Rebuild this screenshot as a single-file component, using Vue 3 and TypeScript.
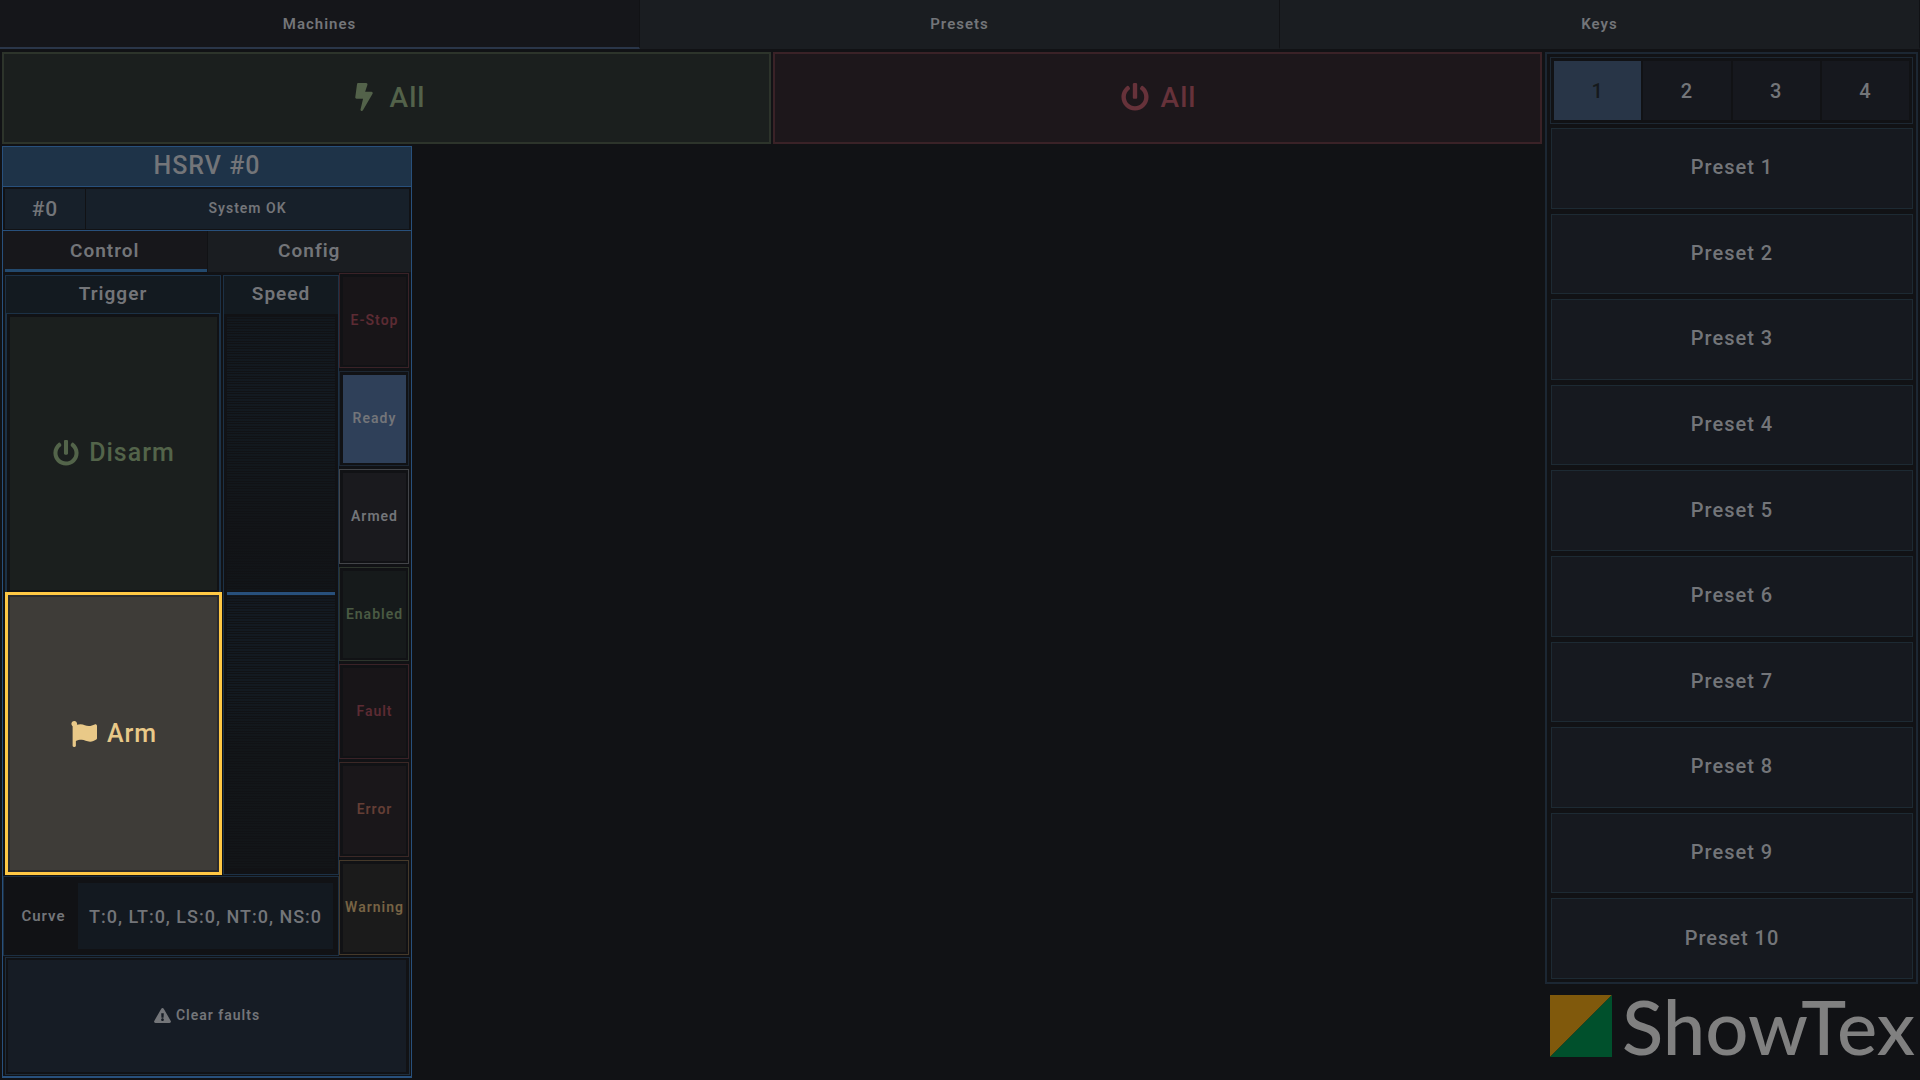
<script setup lang="ts">
import { ref } from 'vue'

interface Status {
  label: string
  tone: string
  on?: boolean
}

const pages = ['Machines', 'Presets', 'Keys']
const activePage = ref('Machines')

const cardTabs = ['Control', 'Config']
const activeCardTab = ref('Control')

const statuses: Status[] = [
  { label: 'E-Stop', tone: 'red' },
  { label: 'Ready', tone: 'blue', on: true },
  { label: 'Armed', tone: 'grey' },
  { label: 'Enabled', tone: 'green' },
  { label: 'Fault', tone: 'red' },
  { label: 'Error', tone: 'orange' },
  { label: 'Warning', tone: 'yellow' },
]

const banks = [1, 2, 3, 4]
const activeBank = ref(1)
const presets = Array.from({ length: 10 }, (_, i) => `Preset ${i + 1}`)
const speed = ref(50)

const powerPath =
  'M400 54.1c63 45 104 118.6 104 201.9 0 136.8-110.8 247.7-247.5 248C120 504.3 8.2 393 8 256.4 7.9 173.1 48.9 99.3 111.8 54.2c11.7-8.3 28-4.8 35 7.7L162.6 90c5.9 10.5 3.1 23.8-6.6 31-41.5 30.8-68 79.6-68 134.9-.1 92.3 74.5 168.1 168 168.1 91.6 0 168.6-74.2 168-169.1-.3-51.8-24.7-101.8-68.1-134-9.7-7.2-12.4-20.5-6.5-30.9l15.8-28.1c7-12.4 23.2-16.1 34.8-7.8zM296 264V24c0-13.3-10.7-24-24-24h-32c-13.3 0-24 10.7-24 24v240c0 13.3 10.7 24 24 24h32c13.3 0 24-10.7 24-24z'
</script>

<template>
  <div class="app">
    <nav class="pages">
      <button
        v-for="page in pages"
        :key="page"
        type="button"
        class="page-tab"
        :class="{ active: page === activePage }"
        @click="activePage = page"
      >
        {{ page }}
      </button>
    </nav>

    <div class="content">
      <main class="machines">
        <div class="all-row">
          <button type="button" class="all green">
            <svg class="icon large" viewBox="-96 0 512 512" aria-hidden="true">
              <path d="M296 160H180.6l42.6-129.8C227.2 15 215.7 0 200 0H56C44 0 33.8 8.9 32.2 20.8l-32 240C-1.7 275.2 9.5 288 24 288h118.7L96.6 482.5c-3.6 15.2 8 29.5 23.3 29.5 8.4 0 16.4-4.4 20.8-12l176-304c9.3-15.9-2.2-36-20.7-36z" />
            </svg>
            <span>All</span>
          </button>
          <button type="button" class="all red">
            <svg class="icon large" viewBox="0 0 512 512" aria-hidden="true"><path :d="powerPath" /></svg>
            <span>All</span>
          </button>
        </div>

        <section class="card">
          <h2 class="card-title">HSRV #0</h2>
          <div class="card-status">
            <div class="card-id">#0</div>
            <div class="card-message">System OK</div>
          </div>
          <div class="card-tabs">
            <button
              v-for="tab in cardTabs"
              :key="tab"
              type="button"
              class="card-tab"
              :class="{ active: tab === activeCardTab }"
              @click="activeCardTab = tab"
            >
              {{ tab }}
            </button>
          </div>

          <div class="card-body">
            <div class="controls">
              <div class="control-row">
                <div class="trigger">
                  <h3 class="control-title">Trigger</h3>
                  <div class="disarm-frame">
                    <button type="button" class="trigger-button disarm">
                      <svg class="icon" viewBox="0 0 512 512" aria-hidden="true"><path :d="powerPath" /></svg>
                      <span>Disarm</span>
                    </button>
                  </div>
                  <div class="arm-frame">
                    <button type="button" class="trigger-button arm">
                      <svg class="icon" viewBox="0 0 512 512" aria-hidden="true">
                        <path d="M349.565 98.783C295.978 98.783 251.721 64 184.348 64c-24.955 0-47.309 4.384-68.045 12.013a55.947 55.947 0 0 0 3.586-23.562C118.117 24.015 94.806 1.206 66.338.048 34.345-1.254 8 24.296 8 56c0 19.026 9.497 35.825 24 45.945V488c0 13.255 10.745 24 24 24h16c13.255 0 24-10.745 24-24v-94.4c28.311-12.064 63.582-22.122 114.435-22.122 53.588 0 97.844 34.783 165.217 34.783 48.169 0 86.667-16.294 122.505-40.858C506.84 359.452 512 349.571 512 339.045v-243.1c0-23.393-24.269-38.87-45.485-29.016-34.338 15.948-76.454 31.854-116.95 31.854z" />
                      </svg>
                      <span>Arm</span>
                    </button>
                  </div>
                </div>

                <div class="speed">
                  <label class="control-title speed-title" for="speed">Speed</label>
                  <input id="speed" v-model="speed" class="slider" type="range" min="0" max="100" />
                </div>
              </div>

              <div class="curve">
                <span class="curve-label">Curve</span>
                <button type="button" class="curve-value">T:0, LT:0, LS:0, NT:0, NS:0</button>
              </div>
            </div>

            <ul class="statuses">
              <li
                v-for="status in statuses"
                :key="status.label"
                class="status"
                :class="[status.tone, { on: status.on }]"
              >
                <span class="status-fill">{{ status.label }}</span>
              </li>
            </ul>
          </div>

          <div class="clear-frame">
            <button type="button" class="clear">
              <svg class="icon warn" viewBox="0 0 576 512" aria-hidden="true">
                <path d="M569.517 440.013C587.975 472.007 564.806 512 527.94 512H48.054c-36.937 0-59.999-40.055-41.577-71.987L246.423 23.985c18.467-32.009 64.72-31.951 83.154 0l239.94 416.028zM288 354c-25.405 0-46 20.595-46 46s20.595 46 46 46 46-20.595 46-46-20.595-46-46-46zm-43.673-165.346l7.418 136c.347 6.364 5.609 11.346 11.982 11.346h48.546c6.373 0 11.635-4.982 11.982-11.346l7.418-136c.375-6.874-5.098-12.654-11.982-12.654h-63.383c-6.884 0-12.356 5.78-11.981 12.654z" />
              </svg>
              <span>Clear faults</span>
            </button>
          </div>
        </section>
      </main>

      <aside class="side">
        <section class="presets">
          <div class="banks">
            <button
              v-for="bank in banks"
              :key="bank"
              type="button"
              class="bank"
              :class="{ active: bank === activeBank }"
              @click="activeBank = bank"
            >
              {{ bank }}
            </button>
          </div>
          <button v-for="preset in presets" :key="preset" type="button" class="preset">{{ preset }}</button>
        </section>
        <div class="logo">
          <svg class="logo-mark" viewBox="0 0 62 62" aria-hidden="true">
            <path d="M0 0H62L0 62Z" fill="#80590c" />
            <path d="M62 0V62H0Z" fill="#00502c" />
          </svg>
          <span class="logo-name">ShowTex</span>
        </div>
      </aside>
    </div>
  </div>
</template>

<style>
body {
  margin: 0;
  background: #111215;
}
</style>

<style scoped>
.app {
  display: flex;
  flex-direction: column;
  min-height: 100vh;
  box-sizing: border-box;
  background: #111215;
  color: #737579;
  font-family: Roboto, "Liberation Sans", sans-serif;
  font-size: 14px;
  font-weight: 600;
  letter-spacing: 1px;
}

.app *,
.app *::before {
  box-sizing: border-box;
}

button {
  margin: 0;
  padding: 0;
  border: 0;
  border-radius: 0;
  background: none;
  color: inherit;
  font: inherit;
  letter-spacing: inherit;
  cursor: pointer;
}

.icon {
  display: block;
  width: 26px;
  height: 26px;
  fill: currentColor;
}

.icon.large {
  width: 28px;
  height: 28px;
}

.pages {
  display: flex;
  height: 49px;
}

.page-tab {
  flex: 1;
  border-right: 1px solid #111215;
  border-bottom: 2px solid #1a1d21;
  background: #1a1d21;
  font-size: 15px;
}

.page-tab.active {
  border-bottom-color: #2a3649;
  background: #15161a;
}

.content {
  display: flex;
  flex: 1;
  gap: 3px;
  padding: 3px 2px 2px;
}

.machines {
  display: flex;
  flex: 1;
  flex-direction: column;
  gap: 2px;
}

.all-row {
  display: flex;
  gap: 2px;
  height: 92px;
}

.all {
  display: flex;
  flex: 1;
  align-items: center;
  justify-content: center;
  gap: 12px;
  padding: 0 0 2px 2px;
  border: 2px solid;
  font-size: 28px;
  font-weight: 500;
}

.all.green {
  border-color: #2d342b;
  background: #1b1f1e;
  color: #53624a;
}

.all.red {
  border-color: #3a2227;
  background: #1d171b;
  color: #66323a;
}

.card {
  display: flex;
  flex: 1;
  flex-direction: column;
  width: 410px;
  border: 1px solid #28507c;
  border-bottom-width: 2px;
}

.card-title {
  height: 40px;
  margin: 0;
  border-bottom: 1px solid #28507c;
  background: #1e3348;
  font-size: 25px;
  font-weight: 500;
  line-height: 37px;
  text-align: center;
}

.card-status {
  display: flex;
  gap: 1px;
  height: 44px;
  padding: 2px 2px 1px;
  border-bottom: 1px solid #28507c;
}

.card-id,
.card-message {
  display: flex;
  align-items: center;
  justify-content: center;
  background: #17202a;
}

.card-id {
  width: 80px;
  font-size: 21px;
  font-weight: 500;
}

.card-message {
  flex: 1;
  padding-bottom: 2px;
}

.card-tabs {
  display: flex;
  gap: 1px;
  height: 41px;
}

.card-tab {
  position: relative;
  flex: 1;
  padding-bottom: 3px;
  background: #1a1d21;
  font-size: 19px;
}

.card-tab.active {
  background: #17171b;
}

.card-tab.active::before {
  position: absolute;
  right: 0;
  bottom: 0;
  left: 2px;
  height: 3px;
  background: #23496d;
  content: "";
}

.card-body {
  display: flex;
  flex: 1;
  padding-right: 2px;
}

.controls {
  display: flex;
  flex: 1;
  flex-direction: column;
  gap: 1px;
  padding-top: 3px;
}

.control-row {
  display: flex;
  flex: 1;
  gap: 1px;
  padding-left: 2px;
}

.trigger {
  display: flex;
  flex-direction: column;
  width: 217px;
}

.control-title {
  height: 39px;
  margin: 0 1px 0 0;
  border: 1px solid #1c3146;
  background: #131a20;
  font-size: 19px;
  font-weight: 600;
  line-height: 35px;
  text-align: center;
}

.disarm-frame {
  display: flex;
  flex: 1;
  margin-right: 1px;
  padding: 3px 2px 2px 3px;
  border: solid #1c3146;
  border-width: 0 2px;
}

.arm-frame {
  display: flex;
  height: 283px;
  padding: 2px;
  border: 3px solid #ffc844;
  background: #2b2b2d;
}

.trigger-button {
  display: flex;
  flex: 1;
  align-items: center;
  justify-content: center;
  gap: 10px;
  padding-left: 1px;
  font-size: 25px;
  font-weight: 500;
}

.disarm {
  padding-bottom: 2px;
  background: #1b1f1e;
  color: #53644a;
}

.arm {
  background: #3e3c38;
  color: #e9c988;
}

.speed {
  display: flex;
  flex: 1;
  flex-direction: column;
  border: 1px solid #1c3146;
}

.speed-title {
  height: 38px;
  margin: 0;
  border: 0;
}

.slider {
  flex: 1;
  width: auto;
  min-height: 0;
  margin: 3px 3px 5px;
  appearance: none;
  background:
    repeating-linear-gradient(transparent 0 1px, #111215 1px 2px, transparent 2px 4px, #111215 4px 5px),
    linear-gradient(#12181e, #131a21 14%, #12181d 26%, #121417 40%, #111519 49%, #131a22 52%, #131a21 68%, #121619 78%, #121518);
  cursor: pointer;
  writing-mode: vertical-lr;
}

.slider::-webkit-slider-runnable-track {
  width: 100%;
}

.slider::-webkit-slider-thumb {
  width: 108px;
  height: 3px;
  appearance: none;
  background: #28507c;
}

.curve {
  display: flex;
  align-items: stretch;
  height: 80px;
  padding: 6px 5px;
  border: 1px solid #1c2f42;
}

.curve-label {
  display: flex;
  flex: 1;
  align-items: center;
  justify-content: center;
  font-size: 15px;
}

.curve-value {
  width: 255px;
  background: #131920;
  font-size: 18px;
  font-weight: 500;
}

.statuses {
  display: flex;
  flex-direction: column;
  gap: 3px;
  width: 70px;
  margin: 0;
  padding: 1px 0;
  list-style: none;
}

.status {
  display: flex;
  flex: 1;
  padding: 3px 2px 2px 3px;
  border: 1px solid;
}

.status-fill {
  display: flex;
  flex: 1;
  align-items: center;
  justify-content: center;
  min-width: 0;
  padding-bottom: 2px;
}

.status.red {
  border-color: #3a2227;
  color: #5c2b33;
}

.status.red .status-fill {
  background: #181518;
}

.status.blue {
  border-color: #1d2733;
}

.status.on .status-fill {
  background: #2f4059;
}

.status.grey {
  border-color: #434549;
}

.status.grey .status-fill {
  background: #1a1a1e;
}

.status.green {
  border-color: #2d352c;
  color: #4a5a43;
}

.status.green .status-fill {
  background: #161a1b;
}

.status.orange {
  border-color: #3b2826;
  color: #643e35;
}

.status.orange .status-fill {
  background: #1a171a;
}

.status.yellow {
  border-color: #45392a;
  color: #776344;
}

.status.yellow .status-fill {
  background: #1b1b1b;
}

.clear-frame {
  display: flex;
  height: 118px;
  margin: 1px 1px 1px 2px;
  padding: 2px 3px 2px 2px;
  border: 1px solid #1d2d3d;
}

.clear {
  display: flex;
  flex: 1;
  align-items: center;
  justify-content: center;
  gap: 5px;
  padding-bottom: 2px;
  background: #161c25;
}

.icon.warn {
  width: 17px;
  height: 15px;
}

.side {
  display: flex;
  flex-direction: column;
  width: 373px;
}

.presets {
  display: flex;
  flex: 1;
  flex-direction: column;
  gap: 5px;
  padding: 3px;
  border: 2px solid #1c2733;
}

.banks {
  display: flex;
  gap: 2px;
  height: 67px;
  margin-bottom: -1px;
  padding: 3px;
  border: 1px solid #1d2833;
}

.bank {
  flex: 1;
  background: #16181e;
  font-size: 20px;
  font-weight: 500;
}

.bank.active {
  background: #283547;
  color: #15191c;
}

.preset {
  flex: 1;
  min-height: 48px;
  margin-left: 1px;
  padding-bottom: 2px;
  border: 1px solid #1d2a33;
  background: #16191f;
  font-size: 20px;
  font-weight: 500;
}

.logo {
  display: flex;
  gap: 10px;
  height: 94px;
  padding: 11px 5px 0;
}

.logo-mark {
  flex: none;
  width: 62px;
  height: 62px;
}

.logo-name {
  color: #808080;
  font-family: Lato, sans-serif;
  font-size: 76px;
  font-weight: 500;
  letter-spacing: 0;
  line-height: 62px;
}
</style>
